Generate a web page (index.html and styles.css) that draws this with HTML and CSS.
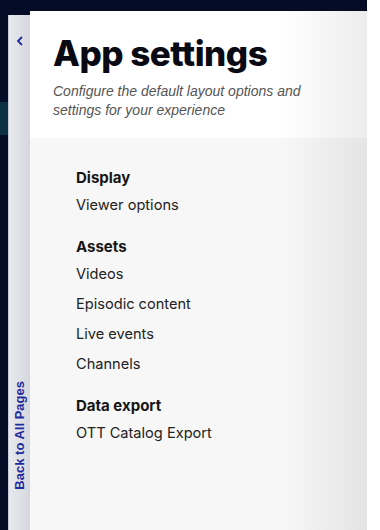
FILE: index.html
```html
<!DOCTYPE html>
<html lang="en">
<head>
    <meta charset="UTF-8">
    <meta name="viewport" content="width=device-width, initial-scale=1.0">
    <title>App settings</title>
    <link rel="stylesheet" href="styles.css">
</head>
<body>
    <div class="shell">
        <div class="rail">
            <div class="rail-mark"></div>
        </div>
        <div class="back">
            <span class="back-chevron">
                <svg width="8" height="10" viewBox="0 0 8 10"><path d="M6 1 L2 5 L6 9" fill="none" stroke="#1c2a9c" stroke-width="1.8"/></svg>
            </span>
            <span class="back-label">Back to All Pages</span>
        </div>
        <div class="panel">
            <div class="panel-head">
                <h1>App settings</h1>
                <p>Configure the default layout options and settings for your experience</p>
            </div>
            <div class="panel-body">
                <div class="group">
                    <h2>Display</h2>
                    <a>Viewer options</a>
                </div>
                <div class="group">
                    <h2>Assets</h2>
                    <a>Videos</a>
                    <a>Episodic content</a>
                    <a>Live events</a>
                    <a>Channels</a>
                </div>
                <div class="group">
                    <h2>Data export</h2>
                    <a>OTT Catalog Export</a>
                </div>
            </div>
        </div>
    </div>
</body>
</html>
```
FILE: styles.css
```css
body { margin: 0; background: #fff; font-family: "Inter", "Liberation Sans", sans-serif; }
.shell { width: 367px; height: 530px; background: #050c26; display: flex; overflow: hidden; }
.rail { width: 8px; flex: none; }
.rail-mark { margin-top: 102px; height: 33px; background: #0b3042; }
.back { width: 22px; flex: none; margin-top: 15px; border-left: 1px solid #c9cbd6; background: linear-gradient(to right, #e9eaef, #d6d7de); display: flex; flex-direction: column; align-items: center; justify-content: space-between; padding: 21px 0 40px; box-sizing: border-box; }
.back-chevron { display: block; line-height: 0; }
.back-label { writing-mode: vertical-rl; transform: rotate(180deg); color: #1c2a9c; font-weight: 700; font-size: 13px; font-family: "Liberation Sans", sans-serif; }
.panel { flex: 1; margin-top: 11px; display: flex; flex-direction: column; }
.panel-head { background: linear-gradient(to right, #fff 75%, #ececec); padding: 20px 20px 18px 23px; }
.panel-head h1 { margin: 0; font-size: 35px; font-weight: 800; color: #0a0a14; letter-spacing: -0.5px; line-height: 44px; }
.panel-head p { margin: 7px 0 0; font-family: "Liberation Sans", sans-serif; font-style: italic; font-size: 14px; line-height: 19px; color: #555; }
.panel-body { flex: 1; background: linear-gradient(to right, #f7f7f7 75%, #e4e4e4); padding: 28px 0 0 46px; }
.group { display: flex; flex-direction: column; margin-bottom: 15px; }
.group h2 { margin: 0; font-size: 15px; font-weight: 700; color: #161616; line-height: 24px; }
.group a { font-size: 14.6px; color: #222; line-height: 30px; }
```
